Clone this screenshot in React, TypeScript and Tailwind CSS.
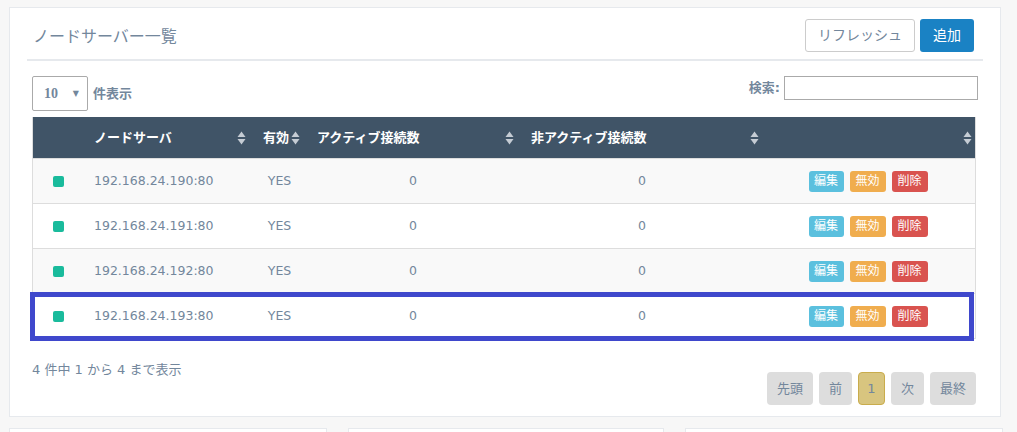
const rows = [
    "192.168.24.190:80",
    "192.168.24.191:80",
    "192.168.24.192:80",
    "192.168.24.193:80",
];

const FONT = { fontFamily: '"DejaVu Sans", "Noto Sans CJK JP", sans-serif' };

function SortIcon() {
    return (
        <svg width="9" height="14" viewBox="0 0 9 14" className="shrink-0">
            <path d="M4.5 0.5 L8.5 6 L0.5 6 Z" fill="#c5ccd4" />
            <path d="M4.5 13.5 L8.5 8 L0.5 8 Z" fill="#c5ccd4" />
        </svg>
    );
}

const cols = "grid grid-cols-[53px_169px_53px_214px_245px_210px]";

export default function App() {
    return (
        <div className="w-[1017px] h-[432px] overflow-hidden bg-[#f7f7f7] pt-[7px] pl-[9px] text-[#73879C]" style={FONT}>
            <div className="w-[992px] h-[410px] bg-white border border-[#e6e9ed] px-[17px] pt-[11px]">
                {/* title */}
                <div className="flex items-center justify-between h-[33px] pr-[9px]">
                    <h2 className="text-[16px] leading-none pl-[6px] pt-[2px] text-[#73879C]">ノードサーバー一覧</h2>
                    <div className="flex gap-[5px]">
                        <button className="h-[33px] w-[110px] rounded-[3px] border border-[#ccc] bg-white text-[14px] text-[#73879C]">
                            リフレッシュ
                        </button>
                        <button className="h-[33px] w-[54px] rounded-[3px] bg-[#1a82c4] text-[14px] text-white">
                            追加
                        </button>
                    </div>
                </div>
                <div className="mt-[7px] h-[2px] bg-[#e6e9ed]" />

                <div className="px-[5px] w-[956px]">
                    {/* controls */}
                    <div className="flex items-start justify-between mt-[15px] w-[946px]">
                        <div className="flex items-center gap-[5px]">
                            <div className="w-[56px] h-[35px] border border-[#aaa] rounded-[2px] flex items-center pl-[11px] pr-[8px] justify-between">
                                <span className="text-[14px] font-bold" style={{ fontFamily: '"Liberation Serif", serif' }}>10</span>
                                <span className="text-[8px] text-[#73879C]">▼</span>
                            </div>
                            <span className="text-[13px] font-bold">件表示</span>
                        </div>
                        <div className="flex items-center gap-[4px]">
                            <span className="text-[13px] font-bold">検索:</span>
                            <input className="w-[194px] h-[24px] border border-[#aaa] outline-none" />
                        </div>
                    </div>

                    {/* table */}
                    <div className="relative mt-[6px] w-[944px] border-x border-[#ddd]">
                        <div className={`${cols} h-[41px] bg-[#405467] text-white text-[13px] font-bold items-center`}>
                            <div />
                            <div className="flex items-center justify-between pl-[8px] pr-[9px]">
                                <span>ノードサーバ</span>
                                <SortIcon />
                            </div>
                            <div className="flex items-center justify-between pl-[8px] pr-[8px]">
                                <span>有効</span>
                                <SortIcon />
                            </div>
                            <div className="flex items-center justify-between pl-[9px] pr-[8px]">
                                <span>アクティブ接続数</span>
                                <SortIcon />
                            </div>
                            <div className="flex items-center justify-between pl-[9px] pr-[8px]">
                                <span>非アクティブ接続数</span>
                                <SortIcon />
                            </div>
                            <div className="flex items-center justify-end pr-[5px]">
                                <SortIcon />
                            </div>
                        </div>
                        {rows.map((ip, i) => (
                            <div
                                key={ip}
                                className={`${cols} h-[45px] items-center text-[12.5px] border-t border-[#ddd] ${i % 2 === 0 ? "bg-[#f9f9f9]" : "bg-white"}`}
                            >
                                <div className="flex justify-center pr-[2px]">
                                    <span className="w-[11px] h-[11px] rounded-[2px] bg-[#1abb9c]" />
                                </div>
                                <div className="pl-[8px]">{ip}</div>
                                <div className="text-center pr-[4px]">YES</div>
                                <div className="text-center pr-[4px]">0</div>
                                <div className="text-center pr-[5px]">0</div>
                                <div className="flex justify-center gap-[6px] pr-[8px]">
                                    <button className="h-[21px] w-[35px] rounded-[3px] bg-[#5bc0de] text-white text-[12px]">編集</button>
                                    <button className="h-[21px] w-[36px] rounded-[3px] bg-[#f0ad4e] text-white text-[12px]">無効</button>
                                    <button className="h-[21px] w-[36px] rounded-[3px] bg-[#d9534f] text-white text-[12px]">削除</button>
                                </div>
                            </div>
                        ))}
                        <div className="border-t border-[#ddd]" />
                        {/* highlight */}
                        <div className="absolute left-[-3px] top-[175px] w-[944px] h-[49px] border-[5px] border-[#3f48cc]" />
                    </div>

                    {/* footer */}
                    <div className="flex items-start justify-between mt-[21px] w-[944px]">
                        <div className="text-[13px]">4 件中 1 から 4 まで表示</div>
                        <div className="flex gap-[6px] mt-[12px]">
                            <button className="h-[33px] w-[46px] rounded-[4px] bg-[#ddd] text-[13px] text-[#73879C]">先頭</button>
                            <button className="h-[33px] w-[33px] rounded-[4px] bg-[#ddd] text-[13px] text-[#73879C]">前</button>
                            <button className="h-[33px] w-[27px] rounded-[4px] bg-[#d8c57f] border border-[#c9ac4c] text-[13px] text-[#73879C]">1</button>
                            <button className="h-[33px] w-[33px] rounded-[4px] bg-[#ddd] text-[13px] text-[#73879C]">次</button>
                            <button className="h-[33px] w-[46px] rounded-[4px] bg-[#ddd] text-[13px] text-[#73879C]">最終</button>
                        </div>
                    </div>
                </div>
            </div>

            {/* lower panels */}
            <div className="grid grid-cols-[318px_316px_318px] gap-x-[21px] mt-[11px]">
                <div className="h-[40px] bg-white border border-[#e6e9ed]" />
                <div className="h-[40px] bg-white border border-[#e6e9ed]" />
                <div className="h-[40px] bg-white border border-[#e6e9ed]" />
            </div>
        </div>
    );
}
